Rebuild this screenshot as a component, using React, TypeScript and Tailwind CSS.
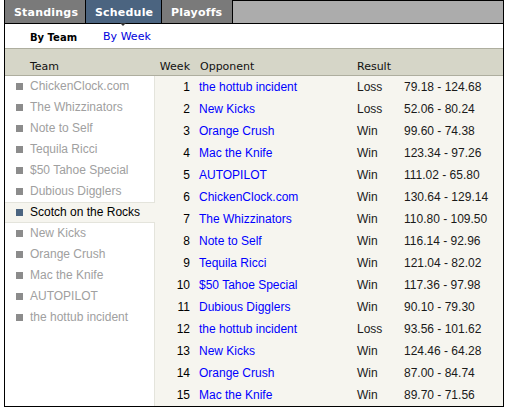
import React from "react";

const TEAMS = [
  "ChickenClock.com",
  "The Whizzinators",
  "Note to Self",
  "Tequila Ricci",
  "$50 Tahoe Special",
  "Dubious Digglers",
  "Scotch on the Rocks",
  "New Kicks",
  "Orange Crush",
  "Mac the Knife",
  "AUTOPILOT",
  "the hottub incident",
];

const SELECTED = "Scotch on the Rocks";

const SCHEDULE: [number, string, string, string][] = [
  [1, "the hottub incident", "Loss", "79.18 - 124.68"],
  [2, "New Kicks", "Loss", "52.06 - 80.24"],
  [3, "Orange Crush", "Win", "99.60 - 74.38"],
  [4, "Mac the Knife", "Win", "123.34 - 97.26"],
  [5, "AUTOPILOT", "Win", "111.02 - 65.80"],
  [6, "ChickenClock.com", "Win", "130.64 - 129.14"],
  [7, "The Whizzinators", "Win", "110.80 - 109.50"],
  [8, "Note to Self", "Win", "116.14 - 92.96"],
  [9, "Tequila Ricci", "Win", "121.04 - 82.02"],
  [10, "$50 Tahoe Special", "Win", "117.36 - 97.98"],
  [11, "Dubious Digglers", "Win", "90.10 - 79.30"],
  [12, "the hottub incident", "Loss", "93.56 - 101.62"],
  [13, "New Kicks", "Win", "124.46 - 64.28"],
  [14, "Orange Crush", "Win", "87.00 - 84.74"],
  [15, "Mac the Knife", "Win", "89.70 - 71.56"],
];

const verdana = "font-['DejaVu_Sans',Verdana,sans-serif]";
const arial = "font-['Liberation_Sans',Arial,sans-serif]";

export default function App() {
  return (
    <div className="bg-white w-[506px] h-[409px]">
      <div className="ml-[4px] w-[500px] h-[407px] border border-t-0 border-black flex flex-col">
        {/* tabs */}
        <div className={`flex h-[24px] border-b border-black text-[11px] font-bold text-white tracking-[0.2px] ${verdana}`}>
          <div className="w-[81px] bg-[#7a7a7a] border-r border-black pl-[9px] pt-[3px] leading-[20px]">
            Standings
          </div>
          <div className="relative w-[76px] bg-[#4b6480] border-r border-black pl-[9px] pt-[3px] leading-[20px]">
            Schedule
            <div className="absolute left-[34px] top-[23px] w-0 h-0 border-l-[3px] border-r-[3px] border-t-[3px] border-l-transparent border-r-transparent border-t-[#333]" />
          </div>
          <div className="w-[71px] bg-[#7a7a7a] border-r border-black pl-[9px] pt-[3px] leading-[20px]">
            Playoffs
          </div>
          <div className="flex-1 bg-[#acacac] border-t border-black" />
        </div>

        {/* sub nav */}
        <div className={`flex items-center h-[25px] pt-[3px] border-b border-[#aeae9f] ${verdana}`}>
          <span className="ml-[25px] text-[10px] font-bold text-black">By Team</span>
          <span className="ml-[26px] text-[11px] text-[#0000dd]">By Week</span>
        </div>

        {/* header */}
        <div className={`flex items-end h-[27px] border-b border-[#aeae9f] bg-[#d6d6c8] pb-[2px] text-[11px] leading-[13px] text-[#111] ${verdana}`}>
          <div className="w-[150px] pl-[25px]">Team</div>
          <div className="w-[35px] text-right">Week</div>
          <div className="ml-[10px] w-[157px]">Opponent</div>
          <div>Result</div>
        </div>

        {/* body */}
        <div className={`flex flex-1 text-[12px] ${arial}`}>
          <div className="w-[150px] flex flex-col bg-white">
            {TEAMS.map((t) => {
              const sel = t === SELECTED;
              return (
                <div
                  key={t}
                  className={
                    sel
                      ? "flex items-center h-[21px] bg-[#f6f5ef] border-y border-[#e4e4dc] text-black"
                      : "flex items-center h-[21px] border-r border-[#e4e4dc] text-[#a0a0a0]"
                  }
                >
                  <span
                    className={`ml-[11px] w-[7px] h-[7px] ${sel ? "bg-[#4b6480]" : "bg-[#8c8c8c]"}`}
                  />
                  <span className="ml-[7px] leading-[21px]">{t}</span>
                </div>
              );
            })}
            <div className="flex-1 border-r border-[#e4e4dc]" />
          </div>
          <div className="flex-1 bg-[#f6f5ef] flex flex-col">
            {SCHEDULE.map(([wk, opp, res, score]) => (
              <div key={wk} className="flex h-[22px] leading-[22px]">
                <div className="w-[35px] text-right text-black">{wk}</div>
                <div className="ml-[9px] w-[158px] text-[#0000ff]">{opp}</div>
                <div className="w-[47px] text-[#1a1a1a]">{res}</div>
                <div className="text-[#1a1a1a]">{score}</div>
              </div>
            ))}
          </div>
        </div>
      </div>
    </div>
  );
}
